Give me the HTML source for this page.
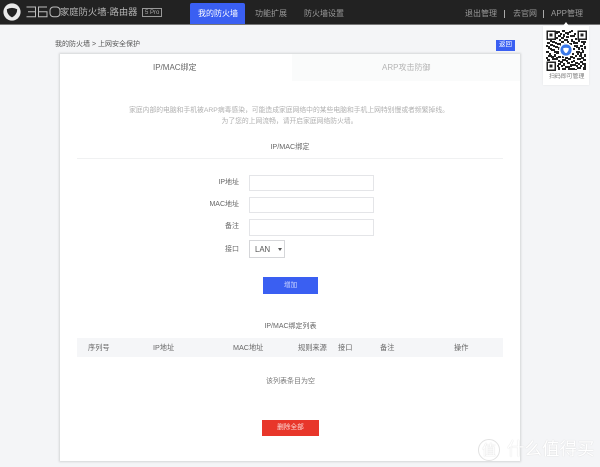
<!DOCTYPE html>
<html lang="zh">
<head>
<meta charset="utf-8">
<style>
html,body{margin:0;padding:0;}
body{width:600px;height:467px;overflow:hidden;background:#f4f5f7;position:relative;font-family:"Liberation Sans","Noto Sans CJK SC",sans-serif;color:#666;}
#w{position:absolute;left:0;top:0;width:600px;height:467px;overflow:hidden;filter:blur(0.3px);}
.a{position:absolute;white-space:nowrap;line-height:1;}
.b{position:absolute;box-sizing:border-box;}
.inp{position:absolute;box-sizing:border-box;left:249px;width:125px;background:#fff;border:1px solid #e4e5e8;}
.c{transform:translateX(-50%);}
.lab{position:absolute;right:361px;font-size:7px;line-height:1;color:#666;white-space:nowrap;}
.th{position:absolute;top:344px;font-size:7.200px;line-height:1;color:#666;white-space:nowrap;}
.nav{position:absolute;top:10px;font-size:8px;line-height:1;color:#9b9b9b;white-space:nowrap;}
</style>
</head>
<body>
<div id="w">
<!-- header -->
<div class="b" style="left:0;top:0;width:600px;height:25px;background:#222;border-bottom:1px solid #777;"></div>
<svg class="b" style="left:3px;top:3px" width="18" height="18" viewBox="0 0 18 18">
<circle cx="9" cy="9" r="8.6" fill="#e9e9e9"/>
<path d="M3.8 6.2 Q9 3.6 14.2 6.2 Q14.2 11.6 9 14.4 Q3.8 11.6 3.8 6.2Z" fill="#222"/>
</svg>
<svg class="b" style="left:26px;top:6px" width="35" height="12" viewBox="0 0 35 12" fill="none" stroke="#bdbdbd" stroke-width="1">
<path d="M0.5 1H9.5V5.8H2M9.5 5.8V10.8H0.5"/>
<path d="M21 1H12.5V10.8H21V5.800H12.5"/>
<rect x="24" y="1" width="10" height="9.8" rx="3.5"/>
</svg>
<div class="a" style="left:60px;top:7.500px;font-size:9.300px;color:#b5b5b5;">家庭防火墙·路由器</div>
<div class="b" style="left:142px;top:8px;width:20px;height:9px;border:1px solid #999;"></div>
<div class="a" style="left:145px;top:9.500px;font-size:6px;color:#aaa;">5 Pro</div>

<div class="b" style="left:190px;top:3px;width:55px;height:21px;background:#3a5ff2;border-radius:2px 2px 0 0;"></div>
<div class="a" style="left:198px;top:10px;font-size:8px;color:#fff;">我的防火墙</div>
<div class="nav" style="left:255px;">功能扩展</div>
<div class="nav" style="left:304px;">防火墙设置</div>
<div class="nav" style="left:465px;">退出管理</div>
<div class="b" style="left:504px;top:10px;width:1px;height:8px;background:#aaa;"></div>
<div class="nav" style="left:513px;">去官网</div>
<div class="b" style="left:543px;top:10px;width:1px;height:8px;background:#aaa;"></div>
<div class="nav" style="left:551px;">APP管理</div>

<!-- QR popup -->
<div class="b" style="left:543px;top:26px;width:46px;height:59px;background:#fff;box-shadow:0 0 2px rgba(0,0,0,.08);"></div>
<svg class="b" style="left:563px;top:22px" width="6" height="4"><path d="M0 4L3 0L6 4Z" fill="#fff"/></svg>
<svg class="b" style="left:546px;top:30px" width="41" height="41" viewBox="0 0 41 41" shape-rendering="crispEdges">
<g fill="none" stroke="#222" stroke-width="1.500">
<rect x="1" y="1" width="8" height="8"/><rect x="32" y="1" width="8" height="8"/><rect x="1" y="32" width="8" height="8"/>
</g>
<g fill="#222">
<rect x="3.500" y="3.500" width="3" height="3"/><rect x="34.500" y="3.500" width="3" height="3"/><rect x="3.500" y="34.500" width="3" height="3"/>
<path d="M12 1h2v2h-2zM16 0h3v2h-3zM21 2h2v3h-2zM25 0h2v2h-2zM28 3h2v2h-2zM12 5h3v2h-3zM17 4h2v3h-2zM24 5h3v2h-3zM13 9h2v2h-2zM18 9h4v2h-4zM25 9h2v3h-2zM29 8h2v2h-2z"/>
<path d="M1 12h3v2h-3zM6 11h3v2h-3zM11 13h4v2h-4zM18 13h2v2h-2zM23 13h3v2h-3zM29 12h3v2h-3zM35 11h5v2h-5zM2 16h2v3h-2zM7 15h2v2h-2zM12 17h2v3h-2zM16 16h2v2h-2zM30 15h2v3h-2zM34 15h3v2h-3zM38 16h2v3h-2z"/>
<path d="M0 21h3v2h-3zM5 19h4v2h-4zM10 21h3v3h-3zM30 21h4v2h-4zM36 20h2v3h-2zM2 25h4v2h-4zM8 24h2v3h-2zM12 26h3v2h-3zM29 25h2v2h-2zM33 25h3v2h-3zM38 24h2v3h-2z"/>
<path d="M1 29h3v2h-3zM6 28h4v2h-4zM12 30h2v2h-2zM16 29h4v2h-4zM22 28h3v2h-3zM27 30h2v2h-2zM31 28h4v2h-4zM37 29h3v2h-3z"/>
<path d="M12 33h3v2h-3zM17 33h2v3h-2zM21 32h3v2h-3zM26 34h4v2h-4zM32 33h2v2h-2zM36 33h4v2h-4zM12 37h2v3h-2zM16 38h4v2h-4zM22 36h2v4h-2zM26 38h3v2h-3zM31 37h4v2h-4zM37 37h3v3h-3z"/>
<path d="M15 11h2v2h-2zM14 22h2v2h-2zM27 18h2v2h-2zM26 23h2v2h-2zM16 26h2v2h-2zM24 26h3v2h-3z"/>
<path d="M14 3h2v2h-2zM19 2h2v2h-2zM23 1h2v2h-2zM27 5h2v2h-2zM15 7h3v2h-3zM20 6h3v2h-3zM10 1h2v3h-2zM10 7h2v2h-2zM4 10h2v2h-2zM9 12h2v2h-2zM16 11h2v2h-2zM21 11h2v2h-2zM27 11h2v3h-2zM32 10h2v2h-2zM37 13h2v2h-2zM0 15h2v2h-2zM4 14h3v2h-3zM9 16h3v2h-3zM4 18h2v2h-2zM14 15h2v2h-2zM28 15h2v2h-2zM32 17h2v3h-2zM35 18h2v2h-2zM8 21h2v2h-2zM3 23h2v2h-2zM31 23h2v2h-2zM34 22h2v3h-2zM0 27h2v2h-2zM5 26h3v2h-3zM10 27h2v3h-2zM19 27h3v2h-3zM27 27h2v2h-2zM35 27h3v2h-3zM14 31h3v2h-3zM20 30h2v2h-2zM25 31h2v2h-2zM29 32h3v2h-3zM34 31h3v2h-3zM11 35h2v2h-2zM15 35h2v2h-2zM19 36h3v2h-3zM24 34h2v3h-2zM30 35h2v2h-2zM34 35h2v2h-2zM38 35h2v2h-2zM24 38h2v2h-2zM29 39h2v1h-2z"/>
</g>
</svg>
<svg class="b" style="left:559px;top:43px" width="14" height="14" viewBox="0 0 14 14">
<circle cx="7" cy="7" r="7" fill="#fff"/>
<circle cx="7" cy="7" r="5.600" fill="#3a78e8"/>
<path d="M4.200 5.200Q7 4.200 9.800 5.200Q9.800 8.600 7 10.200Q4.200 8.600 4.200 5.200Z" fill="#fff"/>
</svg>
<div class="a" style="left:549px;top:74.500px;font-size:5.900px;color:#777;">扫码即可管理</div>

<!-- breadcrumb -->
<div class="a" style="left:55px;top:41px;font-size:7px;color:#555;">我的防火墙 &gt; 上网安全保护</div>
<div class="b" style="left:496px;top:39.500px;width:19px;height:11px;background:#3a5ff2;"></div>
<div class="a" style="left:499px;top:41.500px;font-size:6.500px;color:#fff;">返回</div>

<!-- card -->
<div class="b" style="left:60px;top:54px;width:460px;height:407px;background:#fff;box-shadow:0 0 2px 1px rgba(0,0,0,.13);"></div>
<div class="b" style="left:292px;top:54px;width:228px;height:27px;background:#fafbfb;"></div>
<div class="a" style="left:153px;top:63.500px;font-size:8px;color:#666;">IP/MAC绑定</div>
<div class="a" style="left:382px;top:63.500px;font-size:8px;color:#b5b5b5;">ARP攻击防御</div>

<div class="a c" style="left:289px;top:107.500px;font-size:6.800px;color:#b0b0b0;">家庭内部的电脑和手机被ARP病毒感染，可能造成家庭网络中的某些电脑和手机上网特别慢或者频繁掉线。</div>
<div class="a c" style="left:289.500px;top:118.500px;font-size:6.800px;color:#b0b0b0;">为了您的上网流畅，请开启家庭网络防火墙。</div>

<div class="a c" style="left:290px;top:143px;font-size:7.200px;color:#666;">IP/MAC绑定</div>
<div class="b" style="left:77px;top:158px;width:426px;height:1px;background:#f0f1f2;"></div>

<div class="lab" style="top:178.500px;">IP地址</div>
<div class="inp" style="top:175px;height:16px;"></div>
<div class="lab" style="top:200.500px;">MAC地址</div>
<div class="inp" style="top:197px;height:16px;"></div>
<div class="lab" style="top:223px;">备注</div>
<div class="inp" style="top:219px;height:17px;"></div>
<div class="lab" style="top:245.500px;">接口</div>
<div class="b" style="left:249px;top:240px;width:36px;height:18px;background:#fff;border:1px solid #d5d6d9;"></div>
<div class="a" style="left:255px;top:246px;font-size:7.800px;color:#555;">LAN</div>
<svg class="b" style="left:278px;top:248px" width="4" height="3"><path d="M0 0H4L2 3Z" fill="#555"/></svg>

<div class="b" style="left:263px;top:277px;width:55px;height:17px;background:#3a5ff2;"></div>
<div class="a c" style="left:290.500px;top:282.500px;font-size:6.700px;color:#cdd6ff;">增加</div>

<div class="a c" style="left:290.500px;top:323px;font-size:7px;color:#666;">IP/MAC绑定列表</div>
<div class="b" style="left:77px;top:338px;width:426px;height:19px;background:#f5f6f8;"></div>
<div class="th" style="left:88px;">序列号</div>
<div class="th" style="left:153px;">IP地址</div>
<div class="th" style="left:233px;">MAC地址</div>
<div class="th" style="left:298px;">规则来源</div>
<div class="th" style="left:338px;">接口</div>
<div class="th" style="left:380px;">备注</div>
<div class="th" style="left:454px;">操作</div>

<div class="a c" style="left:290.500px;top:378px;font-size:7px;color:#777;">该列表条目为空</div>

<div class="b" style="left:262px;top:420px;width:57px;height:16px;background:#e8362a;"></div>
<div class="a c" style="left:290.500px;top:424.500px;font-size:6.700px;color:#fbd9d6;">删除全部</div>

<!-- watermark -->
<svg class="b" style="left:477px;top:438px" width="24" height="24" viewBox="0 0 24 24"><circle cx="12" cy="12" r="10.500" fill="rgba(255,255,255,.3)" stroke="#e2e2e2" stroke-width="1"/></svg>
<div class="a" style="left:482px;top:443px;font-size:14px;color:#fff;text-shadow:0 0 1px #c4c4c4;">值</div>
<div class="a" style="left:507px;top:441px;font-size:17.500px;color:#fff;text-shadow:0 0 1px #c8c8c8;">什么值得买</div>
</div>
</body>
</html>
